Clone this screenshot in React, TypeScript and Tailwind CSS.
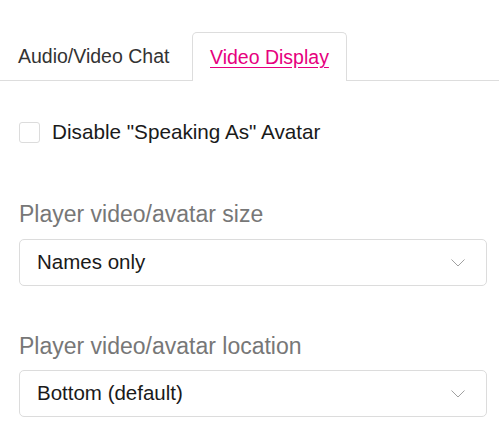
import React from "react";

function Chevron() {
  return (
    <svg width="16" height="10" viewBox="0 0 16 10" fill="none">
      <path d="M1.5 1.5 L8 8 L14.5 1.5" stroke="#a0a0a0" strokeWidth="1" />
    </svg>
  );
}

function Select({ value }: { value: string }) {
  return (
    <div className="flex h-[47px] items-center justify-between rounded-[5px] border border-[#dcdcdc] bg-white pl-[17px] pr-[20px]">
      <span className="text-[20.5px] leading-none text-[#1a1a1a]">{value}</span>
      <Chevron />
    </div>
  );
}

export default function App() {
  return (
    <div
      className="h-[432px] w-[499px] bg-white"
      style={{ fontFamily: "'Liberation Sans', Arial, sans-serif" }}
    >
      <div className="flex items-end border-b border-[#dddddd] pt-[32px]">
        <div className="flex h-[48px] w-[192px] items-center pl-[18px] pt-[2px] text-[19.5px] text-[#333333]">
          Audio/Video Chat
        </div>
        <div className="-mb-px flex h-[49px] w-[155px] items-center rounded-t-[5px] border border-b-0 border-[#dddddd] bg-white pl-[17px] pt-[2px] text-[19.5px] text-[#e6007e]">
          <span className="underline underline-offset-[3px]">Video Display</span>
        </div>
      </div>
      <div className="pl-[19px] pr-[12px]">
        <div className="mt-[41px] flex items-center gap-[12px]">
          <div className="h-[21px] w-[21px] rounded-[3px] border border-[#dcdcdc] bg-white" />
          <span className="text-[20.7px] leading-none text-[#1a1a1a]">Disable "Speaking As" Avatar</span>
        </div>
        <div className="mt-[60px] text-[23px] leading-none text-[#777777]">Player video/avatar size</div>
        <div className="mt-[13px]">
          <Select value="Names only" />
        </div>
        <div className="mt-[49px] text-[23px] leading-none text-[#777777]">Player video/avatar location</div>
        <div className="mt-[12px]">
          <Select value="Bottom (default)" />
        </div>
      </div>
    </div>
  );
}
